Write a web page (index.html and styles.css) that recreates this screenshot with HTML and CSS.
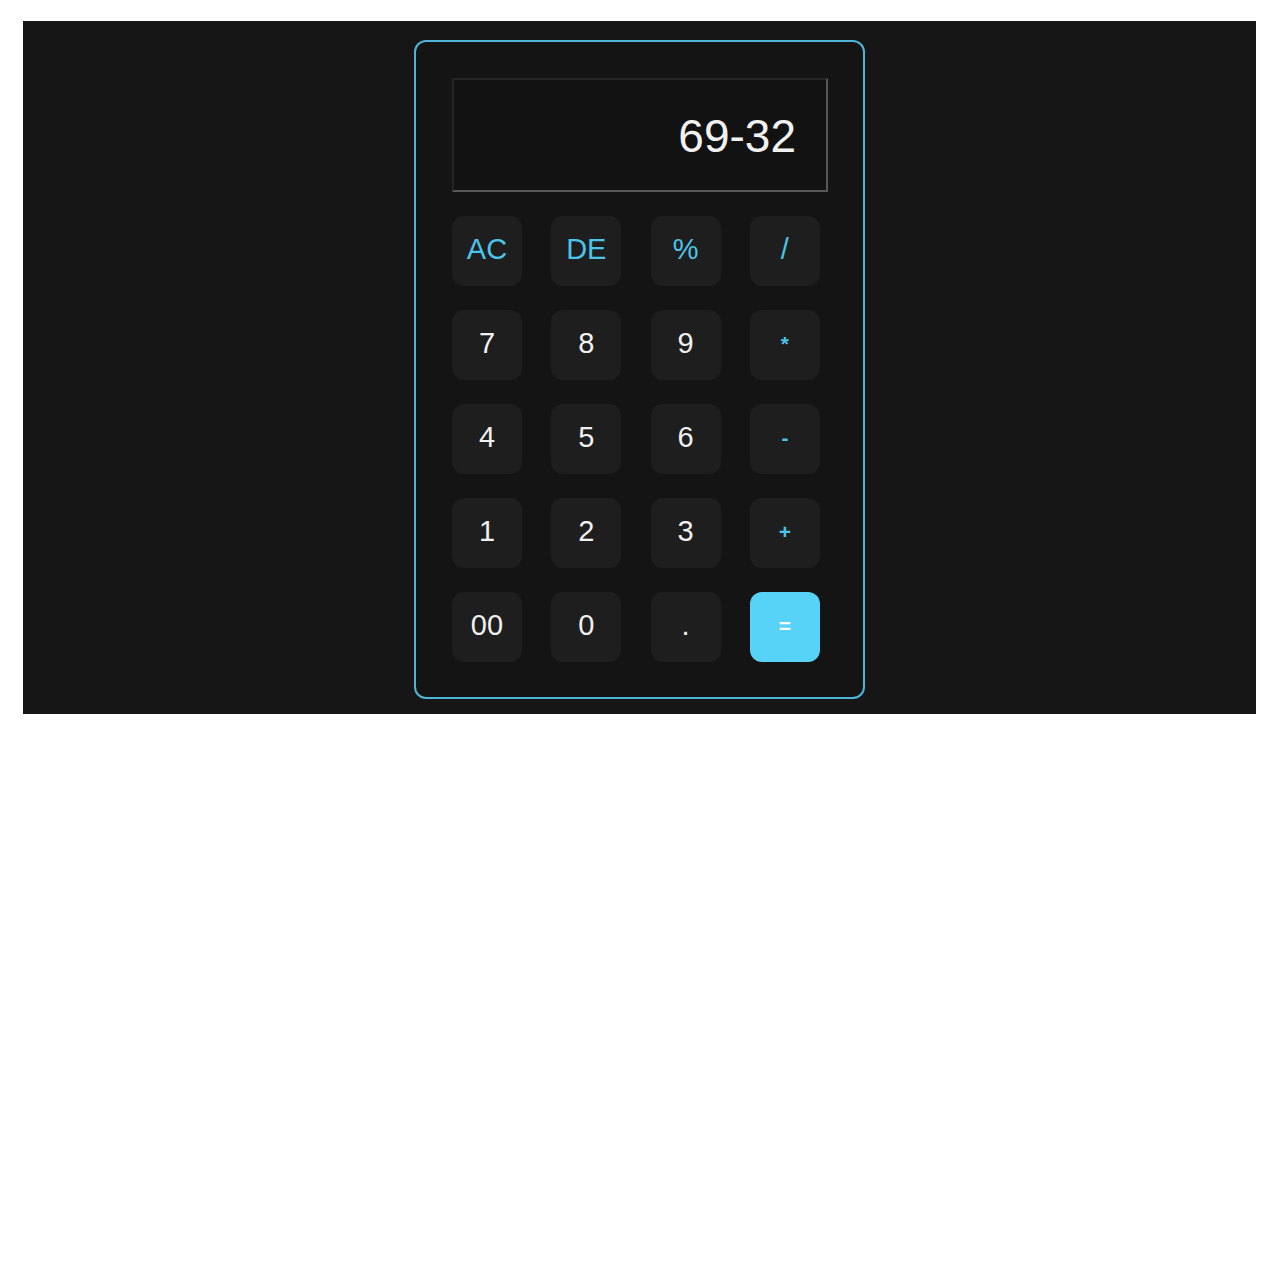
FILE: index.html
```html
<!DOCTYPE html>
<html>
<head>
<meta charset="utf-8">
<link rel="stylesheet" href="styles.css">
</head>
<body>
<div class="stage">
  <div class="calc">
    <div class="display">69-32</div>
    <div class="keys">
      <button class="key op">AC</button>
      <button class="key op">DE</button>
      <button class="key op">%</button>
      <button class="key op">/</button>
      <button class="key">7</button>
      <button class="key">8</button>
      <button class="key">9</button>
      <button class="key op small">*</button>
      <button class="key">4</button>
      <button class="key">5</button>
      <button class="key">6</button>
      <button class="key op small">-</button>
      <button class="key">1</button>
      <button class="key">2</button>
      <button class="key">3</button>
      <button class="key op small">+</button>
      <button class="key">00</button>
      <button class="key">0</button>
      <button class="key">.</button>
      <button class="key eq small">=</button>
    </div>
  </div>
</div>
</body>
</html>
```
FILE: styles.css
```css
html, body {
  margin: 0;
  padding: 0;
  background: #ffffff;
}
body {
  padding: 21px 24px 0 23px;
  font-family: "Liberation Sans", Arial, sans-serif;
}
.stage {
  width: 1233px;
  height: 693px;
  background: #161616;
  box-sizing: border-box;
  padding-top: 19px;
  display: flex;
  justify-content: center;
  align-items: flex-start;
}
.calc {
  width: 451px;
  height: 659px;
  box-sizing: border-box;
  border: 2px solid #4eb4d8;
  border-radius: 12px;
  background: #141414;
  padding: 36px 35px 0 36px;
}
.display {
  height: 114px;
  box-sizing: border-box;
  border-style: solid;
  border-width: 2px;
  border-color: #262626 #585858 #585858 #262626;
  background: #121212;
  color: #f2f2f2;
  font-size: 46px;
  display: flex;
  align-items: center;
  justify-content: flex-end;
  padding-right: 30px;
  padding-top: 1px;
}
.keys {
  margin-top: 24px;
  display: grid;
  grid-template-columns: repeat(4, 70px);
  grid-auto-rows: 70px;
  column-gap: 29.3px;
  row-gap: 24px;
}
.key {
  border: none;
  border-radius: 12px;
  background: #1e1e1e;
  color: #f0f0f0;
  font-family: "Liberation Sans", Arial, sans-serif;
  font-size: 29px;
  padding: 0 0 3px 0;
  display: flex;
  align-items: center;
  justify-content: center;
}
.op {
  color: #4cc3e9;
}
.small {
  font-size: 21px;
  font-weight: bold;
}
.eq {
  background: #56d3f6;
  color: #ffffff;
}
```
